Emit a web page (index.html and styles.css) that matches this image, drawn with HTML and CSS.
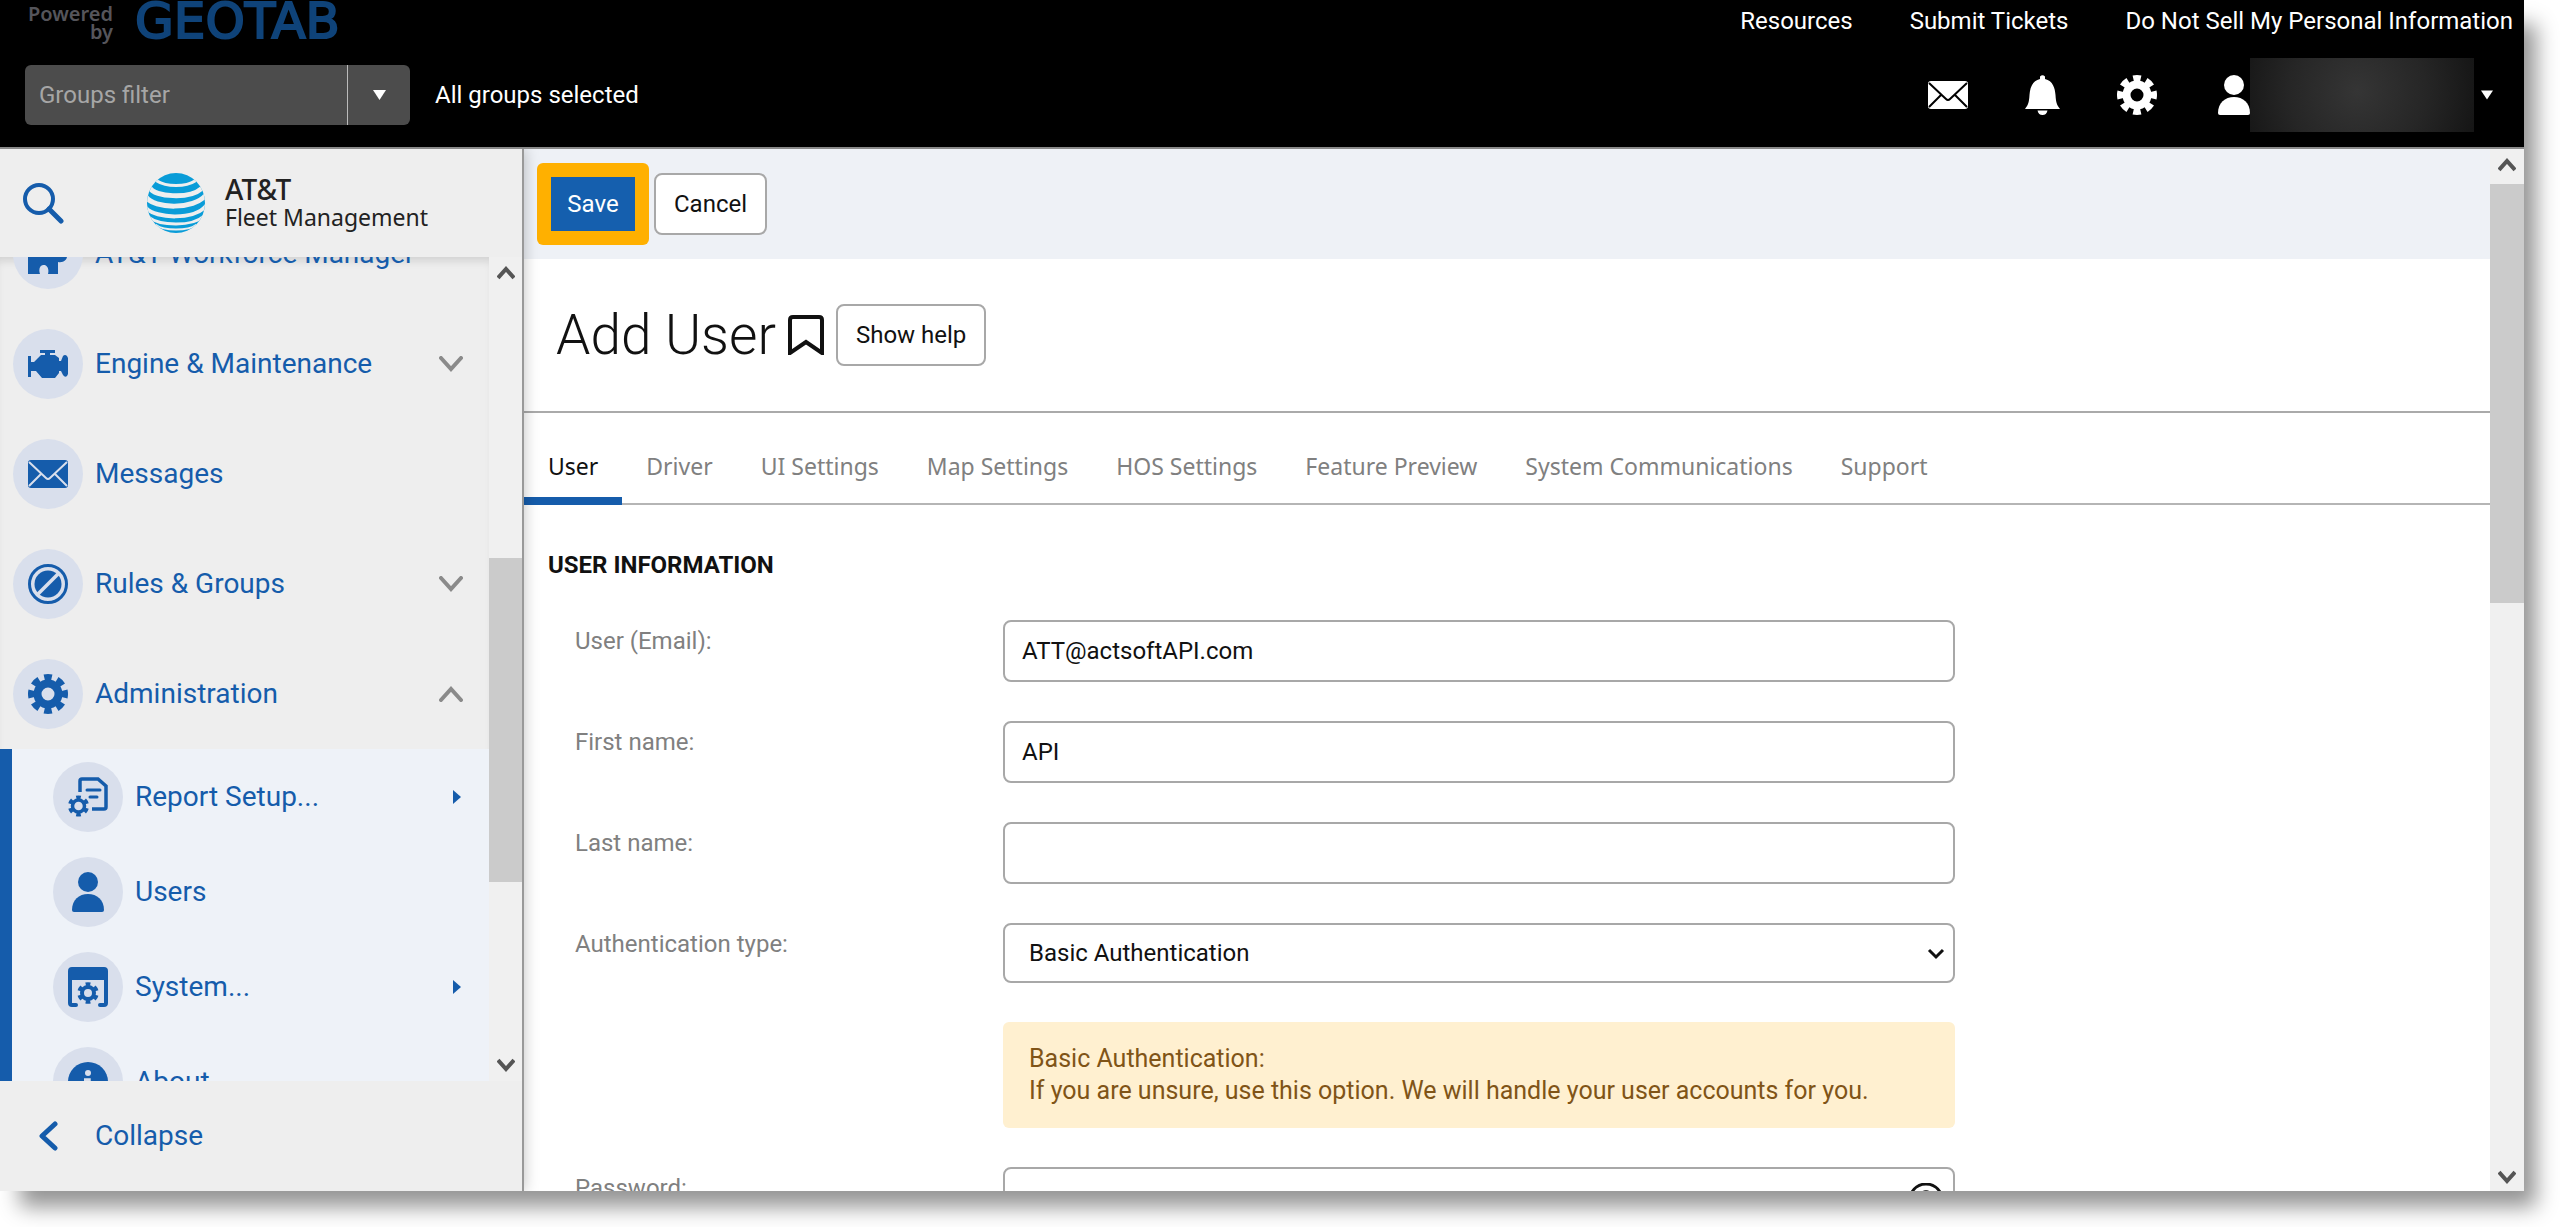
FILE: index.html
```html
<!DOCTYPE html>
<html lang="en">
<head>
<meta charset="utf-8">
<title>Add User - AT&amp;T Fleet Management</title>
<link rel="stylesheet" href="styles.css">
</head>
<body>
<svg class="defs" aria-hidden="true">
  <symbol id="i-gear" viewBox="0 0 40 40">
    <g fill="none" stroke="currentColor">
      <circle cx="20" cy="20" r="10.5" stroke-width="8"/>
      <circle cx="20" cy="20" r="16.5" stroke-width="7" pathLength="16" stroke-dasharray="1.16 .84" stroke-dashoffset=".58"/>
    </g>
  </symbol>
  <symbol id="i-mail" viewBox="0 0 40 28">
    <rect width="40" height="28" rx="3" fill="currentColor"/>
    <path class="cut" d="M1 2 18 18Q20 20 22 18L39 2M1 26 13 14M39 26 27 14" fill="none" stroke-width="2"/>
  </symbol>
  <symbol id="i-user" viewBox="0 0 32 40">
    <circle cx="16" cy="10" r="10" fill="currentColor"/>
    <path d="M0 38C0 28 7 22 16 22S32 28 32 38Q32 40 30 40H2Q0 40 0 38Z" fill="currentColor"/>
  </symbol>
  <symbol id="i-down" viewBox="0 0 24 16">
    <path d="M2 2 12 13 22 2" fill="none" stroke="currentColor" stroke-width="4" stroke-linecap="round"/>
  </symbol>
  <symbol id="i-scroll" viewBox="0 0 18 14">
    <path d="M1 12 9 3 17 12" fill="none" stroke="currentColor" stroke-width="4"/>
  </symbol>
</svg>

<div class="app">
  <header class="top">
    <div class="top-row">
      <div class="geotab"><span class="powered">Powered<br>by</span><span class="geotab-name">GEOTAB</span></div>
      <nav class="links" aria-label="Site">
        <a href="#">Resources</a><a href="#">Submit Tickets</a><a href="#">Do Not Sell My Personal Information</a>
      </nav>
    </div>
    <div class="tool-row">
      <div class="filter">
        <input class="filter-input" type="text" placeholder="Groups filter" aria-label="Groups filter">
        <button class="filter-toggle" aria-label="Open groups filter"><svg width="13" height="10" viewBox="0 0 13 10"><path d="M0 0H13L6.500 10Z" fill="#fff"/></svg></button>
      </div>
      <span class="selected">All groups selected</span>
      <div class="tools">
        <button class="tool" aria-label="Mail"><svg width="40" height="28"><use href="#i-mail"/></svg></button>
        <button class="tool" aria-label="Notifications"><svg width="35" height="40" viewBox="0 0 35 40"><path d="M15 1.500Q17.500-1 20 1.500V4C28 6 30 13 30.500 20 31 28 32 30 35 34H0C3 30 4 28 4.500 20 5 13 7 6 15 4ZM12.500 35.500H22.500Q21.500 40 17.500 40T12.500 35.500Z" fill="#fff"/></svg></button>
        <button class="tool" aria-label="Settings"><svg width="40" height="40"><use href="#i-gear"/></svg></button>
        <button class="account" aria-label="Account"><svg width="32" height="40"><use href="#i-user"/></svg><span class="redacted"></span><svg width="12" height="10" viewBox="0 0 13 10"><path d="M0 0H13L6.500 10Z" fill="#fff"/></svg></button>
      </div>
    </div>
  </header>

  <div class="body">
    <aside class="side">
      <div class="brand-bar">
        <button class="search" aria-label="Search"><svg width="42" height="42" viewBox="0 0 42 42"><circle cx="17" cy="17" r="14" fill="none" stroke="#155cab" stroke-width="4"/><path d="m27 27 12 12" stroke="#155cab" stroke-width="5" stroke-linecap="round"/></svg></button>
        <div class="brand">
          <svg width="60" height="62" viewBox="0 0 60 62">
            <clipPath id="globe"><ellipse cx="30" cy="31" rx="29" ry="30"/></clipPath>
            <g clip-path="url(#globe)"><rect width="60" height="62" fill="#099cd8"/>
              <g fill="none" stroke="#eee" stroke-linecap="round">
                <path d="M11 9C20 15 40 15 49 9" stroke-width="3"/>
                <path d="M4 16C8 25 44 27 55 17" stroke-width="5"/>
                <path d="M0 25C8 37 48 38 60 23" stroke-width="5"/>
                <path d="M0 36C10 47 48 48 60 34" stroke-width="4"/>
                <path d="M2 45C14 54 46 55 58 44" stroke-width="3"/>
                <path d="M10 53C18 59 42 59 50 53" stroke-width="2"/>
              </g></g>
          </svg>
          <div class="brand-text"><span class="brand-name">AT&amp;T</span><span class="brand-sub">Fleet Management</span></div>
        </div>
      </div>
      <div class="nav-wrap">
        <nav class="nav" aria-label="Main">
          <a class="item" href="#"><span class="disc"><svg width="40" height="40" viewBox="0 0 40 40"><path d="M0 10H12C9 0 25 0 22 10H30V18C42 14 42 30 30 28V40H20C23 28 8 28 12 40H0Z" fill="currentColor"/></svg></span><span class="label">AT&amp;T Workforce Manager</span></a>
          <a class="item" href="#"><span class="disc"><svg width="40" height="30" viewBox="0 0 40 30"><path d="M12 1H27V4H22V6H27L31 9V12H33L35 7Q37 5 39 7L40 9V25L39 27Q37 29 35 26L33 22H31V24L27 29H14L8 22H3V28H0V7H3V13H6L13 6H17V4H12Z" fill="currentColor"/></svg></span><span class="label">Engine &amp; Maintenance</span><svg class="chev" width="24" height="16"><use href="#i-down"/></svg></a>
          <a class="item" href="#"><span class="disc"><svg width="40" height="28"><use href="#i-mail"/></svg></span><span class="label">Messages</span></a>
          <a class="item" href="#"><span class="disc"><svg width="40" height="40" viewBox="0 0 40 40"><circle cx="20" cy="20" r="18.500" fill="none" stroke="currentColor" stroke-width="3"/><circle cx="20" cy="20" r="13.500" fill="currentColor"/><path class="cut" d="M9 31 31 9" stroke-width="3.500"/></svg></span><span class="label">Rules &amp; Groups</span><svg class="chev" width="24" height="16"><use href="#i-down"/></svg></a>
          <a class="item" href="#"><span class="disc"><svg width="40" height="40"><use href="#i-gear"/></svg></span><span class="label">Administration</span><svg class="chev up" width="24" height="16"><use href="#i-down"/></svg></a>
          <div class="sub">
            <a class="subitem" href="#"><span class="disc"><svg width="40" height="40" viewBox="0 0 40 40"><g fill="none" stroke="currentColor" stroke-width="3.500"><path d="M12 15V4Q12 2 14 2H30L38 9V30Q38 32 36 32H24" /><path d="M19 13H32M22 20H29" stroke-width="3" stroke-linecap="round"/><circle cx="10.500" cy="29" r="6"/><circle cx="10.500" cy="29" r="8.800" stroke-width="3.500" pathLength="12" stroke-dasharray="1 1" stroke-dashoffset="-.5"/></g></svg></span><span class="label">Report Setup...</span><svg class="arrow" width="8" height="14" viewBox="0 0 8 14"><path d="M0 0 8 7 0 14Z" fill="currentColor"/></svg></a>
            <a class="subitem" href="#"><span class="disc"><svg width="32" height="40"><use href="#i-user"/></svg></span><span class="label">Users</span></a>
            <a class="subitem" href="#"><span class="disc"><svg width="40" height="40" viewBox="0 0 40 40"><path d="M8 38H4Q2 38 2 36V4Q2 2 4 2H36Q38 2 38 4V36Q38 38 36 38H32" fill="none" stroke="currentColor" stroke-width="4" stroke-linecap="round"/><path d="M1 2H39V13H1Z" fill="currentColor"/><g fill="none" stroke="currentColor"><circle cx="20" cy="26" r="6" stroke-width="4"/><circle cx="20" cy="26" r="9" stroke-width="3.500" pathLength="12" stroke-dasharray="1 1" stroke-dashoffset="-.5"/></g></svg></span><span class="label">System...</span><svg class="arrow" width="8" height="14" viewBox="0 0 8 14"><path d="M0 0 8 7 0 14Z" fill="currentColor"/></svg></a>
            <a class="subitem" href="#"><span class="disc"><svg width="40" height="40" viewBox="0 0 40 40"><circle cx="20" cy="20" r="20" fill="currentColor"/><circle cx="20" cy="11" r="3" fill="#d9dfec"/><path d="M16 18H21V30" fill="none" stroke="#d9dfec" stroke-width="3.500"/></svg></span><span class="label">About...</span></a>
          </div>
        </nav>
        <div class="scroll side-scroll" aria-hidden="true"><svg width="18" height="14"><use href="#i-scroll"/></svg><span class="track"><i class="thumb"></i></span><svg class="flip" width="18" height="14"><use href="#i-scroll"/></svg></div>
      </div>
      <button class="collapse"><svg width="20" height="30" viewBox="0 0 20 30"><path d="M17 3 4 15 17 27" fill="none" stroke="currentColor" stroke-width="5" stroke-linecap="round" stroke-linejoin="round"/></svg><span>Collapse</span></button>
    </aside>

    <main class="main">
      <div class="page">
        <div class="actions">
          <span class="highlight"><button class="save">Save</button></span>
          <button class="btn">Cancel</button>
        </div>
        <div class="title">
          <h1>Add User</h1>
          <svg width="36" height="40" viewBox="0 0 36 40"><path d="M2 38V5Q2 2 5 2H31Q34 2 34 5V38L18 27Z" fill="none" stroke="#111" stroke-width="4"/></svg>
          <button class="btn">Show help</button>
        </div>
        <nav class="tabs" aria-label="Sections">
          <a class="tab active" href="#">User</a><a class="tab" href="#">Driver</a><a class="tab" href="#">UI Settings</a><a class="tab" href="#">Map Settings</a><a class="tab" href="#">HOS Settings</a><a class="tab" href="#">Feature Preview</a><a class="tab" href="#">System Communications</a><a class="tab" href="#">Support</a>
        </nav>
        <form class="form">
          <h2>USER INFORMATION</h2>
          <div class="row"><label for="email">User (Email):</label><input class="field" id="email" type="text" value="ATT@actsoftAPI.com"></div>
          <div class="row"><label for="first">First name:</label><input class="field" id="first" type="text" value="API"></div>
          <div class="row"><label for="last">Last name:</label><input class="field" id="last" type="text"></div>
          <div class="row"><label for="auth">Authentication type:</label>
            <div class="control"><select class="field select" id="auth"><option>Basic Authentication</option></select><svg class="select-mark" width="18" height="12" viewBox="0 0 18 12"><path d="M2 2 9 9 16 2" fill="none" stroke="#111" stroke-width="3"/></svg>
            <p class="note">Basic Authentication:<br>If you are unsure, use this option. We will handle your user accounts for you.</p></div></div>
          <div class="row"><label for="pass">Password:</label>
            <div class="control"><input class="field" id="pass" type="password"><svg class="eye" width="34" height="26" viewBox="0 0 34 26"><path d="M1 13C7-3 27-3 33 13 27 29 7 29 1 13Z" fill="none" stroke="#111" stroke-width="3"/><circle cx="17" cy="13" r="6" fill="#444"/></svg></div></div>
        </form>
      </div>
      <div class="scroll main-scroll" aria-hidden="true"><svg width="18" height="14"><use href="#i-scroll"/></svg><span class="track"><i class="thumb"></i></span><svg class="flip" width="18" height="14"><use href="#i-scroll"/></svg></div>
    </main>
  </div>
</div>
</body>
</html>
```
FILE: styles.css
```css
* { box-sizing: border-box; }
body { margin: 0; min-height: 100vh; background: #fff; font: 24px/32px Roboto, "Liberation Sans", sans-serif; color: #111; }
a { color: inherit; text-decoration: none; }
button { font: inherit; color: inherit; background: none; border: 0; padding: 0; }
svg { display: block; flex: none; }
h1, h2, p { margin: 0; }
.defs { position: absolute; width: 0; height: 0; }

.app { display: flex; flex-direction: column; width: calc(100% - 36px); height: calc(100vh - 36px); box-shadow: 16px 20px 20px -4px rgba(0, 0, 0, .42); }

/* top bar */
.top { flex: none; height: 149px; background: #000; color: #fff; border-bottom: 2px solid #8a8a8a; overflow: hidden; }
.top-row { display: flex; justify-content: space-between; height: 42px; padding: 0 11px 0 28px; }
.geotab { display: flex; gap: 22px; align-items: center; }
.powered { padding-top: 4px; font: 600 20px/18px "Noto Sans", sans-serif; color: #55555b; text-align: right; }
.geotab-name { font: 50px/44px "DejaVu Sans", sans-serif; color: #0f4379; -webkit-text-stroke: 2px #0f4379; }
.links { display: flex; gap: 57px; align-items: center; }
.tool-row { display: flex; align-items: center; height: 106px; padding: 0 31px 0 25px; }
.filter { display: flex; width: 385px; height: 60px; border-radius: 6px; background: #4c4c4c; overflow: hidden; }
.filter-input { flex: 1; min-width: 0; padding: 0 14px; border: 0; background: none; font: inherit; color: #fff; }
.filter-input::placeholder { color: #a6a6a6; opacity: 1; }
.filter-toggle { display: grid; place-items: center; width: 63px; border-left: 1px solid #bbb; }
.selected { margin-left: 25px; }
.tools { display: flex; align-items: center; margin-left: auto; gap: 57px; }
.account { display: flex; align-items: center; margin-left: 4px; }
.redacted { width: 224px; height: 74px; margin-right: 7px; background: radial-gradient(circle at 48% 45%, #353535, #262626 55%, #151515); }

/* sidebar */
.body { flex: 1; display: flex; min-height: 0; }
.side { position: relative; z-index: 1; display: flex; flex-direction: column; flex: none; width: 524px; background: #eee; border-right: 2px solid #999; box-shadow: 0 0 14px rgba(0, 0, 0, .25); color: #155cab; font-size: 28px; clip-path: inset(0 -20px 0 0); }
.brand-bar { position: relative; z-index: 1; display: flex; flex: none; gap: 82px; align-items: center; height: 108px; padding-left: 22px; }
.brand { display: flex; gap: 19px; align-items: center; }
.brand-text { display: flex; flex-direction: column; font-family: "Noto Sans", sans-serif; color: #222; }
.brand-name { font-size: 28px; font-weight: 500; line-height: 28px; }
.brand-sub { font-size: 23px; line-height: 28px; }
.nav-wrap { flex: 1; display: flex; min-height: 0; }
.nav { flex: 1; min-height: 0; overflow: hidden; box-shadow: inset 0 8px 8px -4px rgba(0, 0, 0, .12); }
.item { display: flex; align-items: center; gap: 12px; height: 110px; padding: 0 26px 0 13px; }
.item:first-child { margin-top: -58px; }
.disc { display: grid; flex: none; place-items: center; width: 70px; height: 70px; border-radius: 50%; background: #d9dfec; --cut: #d9dfec; }
.cut { stroke: var(--cut, #000); }
.label { flex: 1; white-space: nowrap; }
.chev { color: #8a8a8a; }
.up, .flip { transform: rotate(180deg); }
.sub { border-left: 12px solid #155cab; background: #eef2f8; }
.subitem { display: flex; align-items: center; gap: 12px; height: 95px; padding: 0 28px 0 41px; }
.collapse { display: flex; flex: none; gap: 37px; align-items: center; height: 110px; padding-left: 38px; }

/* scroll bars */
.scroll { display: flex; flex: none; flex-direction: column; align-items: center; width: 34px; padding: 9px 0 7px; gap: 12px; background: #f0f0f0; color: #555; }
.track { flex: 1; align-self: stretch; min-height: 0; }
.thumb { display: block; background: #cbcbcb; }
.side-scroll { width: 33px; padding-bottom: 9px; }
.side-scroll .thumb { height: 43%; margin-top: 266px; }
.main-scroll .thumb { height: 43%; }

/* page */
.main { flex: 1; display: flex; min-width: 0; background: #fff; }
.page { flex: 1; min-width: 0; overflow: hidden; }
.actions { display: flex; gap: 5px; align-items: center; height: 110px; padding-left: 13px; background: #eef1f6; }
.highlight { padding: 14px; border-radius: 6px; background: #ffb000; }
.save { display: block; width: 84px; height: 54px; background: #155fae; color: #fff; }
.btn { height: 62px; padding: 0 18px; border: 2px solid #a8a8a8; border-radius: 8px; background: #fff; }
.title { display: flex; gap: 12px; align-items: center; height: 154px; padding-left: 32px; border-bottom: 2px solid #aaa; }
.title h1 { font-size: 55px; font-weight: 300; line-height: 64px; }
.tabs { display: flex; height: 92px; border-bottom: 2px solid #b5b5b5; font: 23px/32px "Noto Sans", sans-serif; color: #808080; }
.tab { padding: 37px 24px 0; height: 92px; white-space: nowrap; }
.active { color: #111; border-bottom: 8px solid #155cab; }
.form { display: flex; flex-direction: column; gap: 39px; padding: 44px 30px 0 24px; }
.form h2 { font-size: 24px; line-height: 32px; font-weight: 700; }
.row { display: grid; grid-template-columns: 428px minmax(0, 952px); align-items: start; padding-left: 27px; }
.row label { padding-top: 5px; color: #808080; }
.field { width: 100%; height: 62px; padding: 0 17px; border: 2px solid #a8a8a8; border-radius: 8px; background: #fff; font: inherit; color: #111; }
.control { position: relative; }
.select { display: block; height: 60px; padding: 0 24px; appearance: none; }
.select-mark { position: absolute; top: 25px; right: 10px; }
.eye { position: absolute; top: 16px; right: 12px; }
.note { margin-top: 39px; padding: 21px 26px; border-radius: 6px; background: #fff0d0; color: #805417; font-size: 25px; }
```
